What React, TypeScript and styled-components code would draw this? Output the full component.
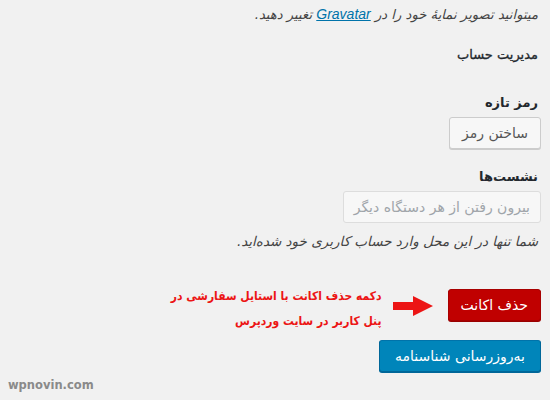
import React from "react";
import styled, { createGlobalStyle } from "styled-components";

const GlobalStyle = createGlobalStyle`
  html, body {
    margin: 0;
    padding: 0;
    background: #f1f1f1;
  }
  body {
    width: 550px;
    height: 400px;
    overflow: hidden;
    font-family: "DejaVu Sans", Tahoma, sans-serif;
    color: #23282d;
  }
`;

const Page = styled.div`
  direction: rtl;
  height: 400px;
  padding: 5px 9px 0 0;
  box-sizing: border-box;
  display: flex;
  flex-direction: column;
  align-items: flex-start;
  position: relative;
`;

const Note = styled.p`
  margin: 0;
  font-size: 13.2px;
  font-style: italic;
  color: #444;
  line-height: 18px;
  padding-right: 3px;

  a {
    color: #0073aa;
    text-decoration: underline;
    font-family: "Liberation Sans", Arial, sans-serif;
    font-size: 14px;
  }
`;

const SectionTitle = styled.h2`
  margin: ${(p: { $top: number }) => p.$top}px 0 0;
  font-size: 13px;
  font-weight: normal;
  color: #23282d;
  padding-right: 3px;
  line-height: 18px;
  -webkit-text-stroke: 0.3px #23282d;
`;

const FieldLabel = styled.h3`
  margin: ${(p: { $top: number }) => p.$top}px 0 5px;
  font-size: 13px;
  font-weight: bold;
  color: #23282d;
  padding-right: 3px;
  line-height: 18px;
`;

const Button = styled.button<{ $kind?: "default" | "disabled" | "danger" | "primary" }>`
  font-family: "DejaVu Sans", Tahoma, sans-serif;
  font-size: 14px;
  height: 32px;
  padding: 0 12px;
  border-radius: 3px;
  border: 1px solid;
  cursor: pointer;
  white-space: nowrap;
  direction: rtl;
  flex: none;
  ${({ $kind }) =>
    $kind === "disabled"
      ? `background:#f7f7f7;border-color:#ddd;color:#a0a5aa;box-shadow:none;padding:0 10px;`
      : $kind === "danger"
      ? `background:#c00000;border-color:#a80000;color:#fff;box-shadow:0 1px 0 #900;margin-bottom:8px;`
      : $kind === "primary"
      ? `background:#0085ba;border-color:#0073aa #006799 #006799;color:#fff;box-shadow:0 1px 0 #006799;padding:0 15px;`
      : `background:#f7f7f7;border-color:#ccc;color:#555;box-shadow:0 1px 0 #ccc;`}
`;

const Description = styled.p`
  margin: 9px 0 0;
  font-size: 13.5px;
  font-style: italic;
  color: #444;
  padding-right: 3px;
  line-height: 18px;
`;

const ActionRow = styled.div`
  display: flex;
  align-items: center;
  margin-top: 34px;
`;

const Arrow = styled.svg`
  margin: 0 15px 0 11px;
  flex: none;
  align-self: flex-start;
  margin-top: 12px;
`;

const Callout = styled.div`
  color: #ec1515;
  font-family: "DejaVu Sans Condensed", "DejaVu Sans", sans-serif;
  font-stretch: condensed;
  font-weight: bold;
  font-size: 12px;
  line-height: 25px;
`;

const SubmitRow = styled.div`
  margin-top: 6px;
`;

const Brand = styled.div`
  position: absolute;
  left: 8px;
  bottom: 8px;
  direction: ltr;
  font-family: "DejaVu Sans", sans-serif;
  font-weight: bold;
  font-size: 11.5px;
  color: #8a8a8a;
`;

export default function App() {
  return (
    <>
      <GlobalStyle />
      <Page>
        <Note>
          میتوانید تصویر نمایهٔ خود را در <a href="#">Gravatar</a> تغییر دهید.
        </Note>
        <SectionTitle $top={22}>مدیریت حساب</SectionTitle>
        <FieldLabel $top={30}>رمز تازه</FieldLabel>
        <Button>ساختن رمز</Button>
        <FieldLabel $top={19}>نشست‌ها</FieldLabel>
        <Button $kind="disabled">بیرون رفتن از هر دستگاه دیگر</Button>
        <Description>شما تنها در این محل وارد حساب کاربری خود شده‌اید.</Description>
        <ActionRow>
          <Button $kind="danger">حذف اکانت</Button>
          <Arrow width="40" height="20" viewBox="0 0 40 20">
            <polygon points="40,10 20,0 20,6 0,6 0,14 20,14 20,20" fill="#ec1515" />
          </Arrow>
          <Callout>
            دکمه حذف اکانت با استایل سفارشی در
            <br />
            پنل کاربر در سایت وردپرس
          </Callout>
        </ActionRow>
        <SubmitRow>
          <Button $kind="primary">به‌روزرسانی شناسنامه</Button>
        </SubmitRow>
        <Brand>wpnovin.com</Brand>
      </Page>
    </>
  );
}
